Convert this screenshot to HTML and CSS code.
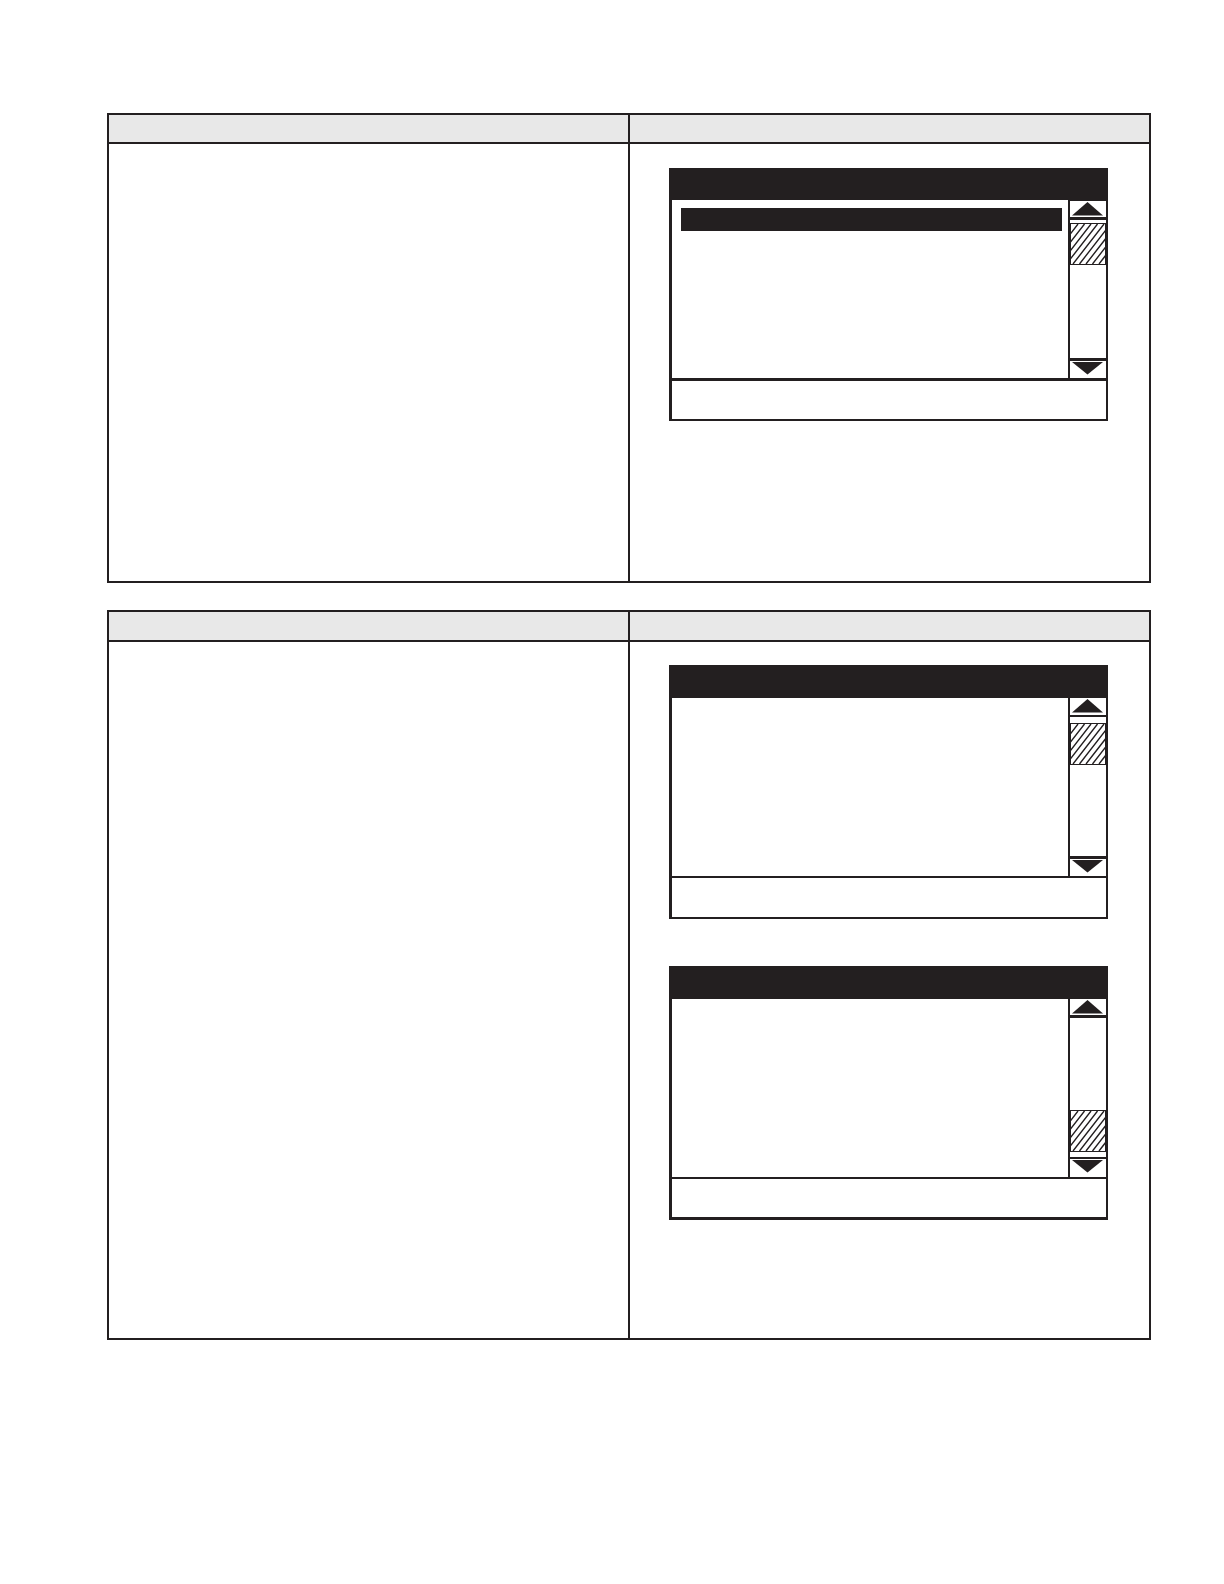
FILE: index.html
```html
<!DOCTYPE html>
<html lang="en">
<head>
    <meta charset="UTF-8">
    <meta name="viewport" content="width=device-width, initial-scale=1.0">
    <title>Display Screens</title>
    <link rel="stylesheet" href="styles.css">
</head>
<body>
    <!-- Shared hatch lines for the scrollbar thumbs -->
    <svg class="defs" aria-hidden="true">
        <symbol id="hatch" viewBox="0 0 34 40">
            <path d="M7 0l-31 40M13.500 0l-31 40M20 0l-31 40M26.500 0l-31 40M33 0l-31 40M39.500 0l-31 40M46 0l-31 40M52.500 0l-31 40M59 0l-31 40" fill="none" stroke="#231f20" stroke-width="1.4"/>
        </symbol>
    </svg>

    <main class="page">
        <table class="steps">
            <thead>
                <tr><th></th><th></th></tr>
            </thead>
            <tbody>
                <tr>
                    <td></td>
                    <td class="display short">
                        <section class="screen first">
                            <header class="title"></header>
                            <div class="body">
                                <ul class="list">
                                    <li class="selected"></li>
                                </ul>
                                <div class="scrollbar">
                                    <button class="arrow up thick" aria-label="Scroll up">
                                        <svg width="32" height="14" viewBox="0 0 32 14"><path d="M15.500 0L31 13.500H0z"/></svg>
                                    </button>
                                    <div class="track near-top">
                                        <svg class="thumb"><use href="#hatch"/></svg>
                                    </div>
                                    <button class="arrow down" aria-label="Scroll down">
                                        <svg width="32" height="13" viewBox="0 0 32 13"><path d="M0 0h31L15.500 12.500z"/></svg>
                                    </button>
                                </div>
                            </div>
                            <footer class="status"></footer>
                        </section>
                    </td>
                </tr>
            </tbody>
        </table>

        <table class="steps">
            <thead>
                <tr><th></th><th></th></tr>
            </thead>
            <tbody>
                <tr>
                    <td></td>
                    <td class="display">
                        <section class="screen">
                            <header class="title"></header>
                            <div class="body">
                                <ul class="list"></ul>
                                <div class="scrollbar">
                                    <button class="arrow up" aria-label="Scroll up">
                                        <svg width="32" height="14" viewBox="0 0 32 14"><path d="M15.500 0L31 13.500H0z"/></svg>
                                    </button>
                                    <div class="track">
                                        <svg class="thumb"><use href="#hatch"/></svg>
                                    </div>
                                    <button class="arrow down" aria-label="Scroll down">
                                        <svg width="32" height="13" viewBox="0 0 32 13"><path d="M0 0h31L15.500 12.500z"/></svg>
                                    </button>
                                </div>
                            </div>
                            <footer class="status"></footer>
                        </section>

                        <section class="screen last">
                            <header class="title"></header>
                            <div class="body">
                                <ul class="list"></ul>
                                <div class="scrollbar">
                                    <button class="arrow up thick" aria-label="Scroll up">
                                        <svg width="32" height="14" viewBox="0 0 32 14"><path d="M15.500 0L31 13.500H0z"/></svg>
                                    </button>
                                    <div class="track at-end">
                                        <svg class="thumb"><use href="#hatch"/></svg>
                                    </div>
                                    <button class="arrow down thin" aria-label="Scroll down">
                                        <svg width="32" height="13" viewBox="0 0 32 13"><path d="M0 0h31L15.500 12.500z"/></svg>
                                    </button>
                                </div>
                            </div>
                            <footer class="status"></footer>
                        </section>
                    </td>
                </tr>
            </tbody>
        </table>
    </main>
</body>
</html>
```
FILE: styles.css
```css
* {
    margin: 0;
    padding: 0;
    box-sizing: border-box;
}

body {
    font-family: "Liberation Sans", Arial, sans-serif;
    background: #fff;
    color: #231f20;
}

.defs {
    display: none;
}

.page {
    display: flex;
    flex-direction: column;
    gap: 27px;
    padding: 113px 73px 48px 107px;
}

.steps {
    width: 100%;
    table-layout: fixed;
    border-collapse: collapse;
}

.steps th,
.steps td {
    border: 2px solid #231f20;
    vertical-align: top;
}

.steps th {
    height: 29px;
    background: #e8e8e8;
}

.steps + .steps th {
    height: 30px;
}

.steps .display {
    padding: 23px 41px 118px 39px;
}

.steps .short {
    padding-top: 24px;
    padding-bottom: 160px;
}

/* Device screen */
.screen {
    border: solid #231f20;
    border-width: 0 2px 2px 3px;
}

.screen + .screen {
    margin-top: 47px;
}

.screen.last {
    border-bottom-width: 3px;
}

.title {
    height: 33px;
    background: #231f20;
}

.first .title {
    height: 32px;
}

.body {
    display: flex;
    height: 178px;
}

.list {
    flex: 1;
    padding: 8px 6px 8px 9px;
    list-style: none;
}

.selected {
    height: 23px;
    background: #231f20;
}

.status {
    height: 41px;
    border-top: 2px solid #231f20;
}

.first .status {
    border-top-width: 3px;
}

.last .status {
    height: 40px;
}

/* Scrollbar */
.scrollbar {
    display: flex;
    flex-direction: column;
    width: 38px;
    border-left: 2px solid #231f20;
}

.first .scrollbar {
    border-top: 1px solid #231f20;
}

.arrow {
    display: flex;
    justify-content: center;
    padding-top: 1px;
    border: 0 solid #231f20;
    background: #fff;
    cursor: pointer;
}

.arrow svg {
    fill: #231f20;
}

.up {
    height: 19px;
    border-bottom-width: 2px;
}

.up.thick {
    border-bottom-width: 3px;
}

.down {
    height: 20px;
    border-top-width: 3px;
}

.down.thin {
    border-top-width: 2px;
}

.track {
    display: flex;
    flex: 1;
    align-items: flex-start;
    padding: 6px 0 5px;
}

.track.near-top {
    padding-top: 3px;
}

.track.at-end {
    align-items: flex-end;
}

.thumb {
    width: 100%;
    height: 42px;
    border: 1px solid #231f20;
}
```
